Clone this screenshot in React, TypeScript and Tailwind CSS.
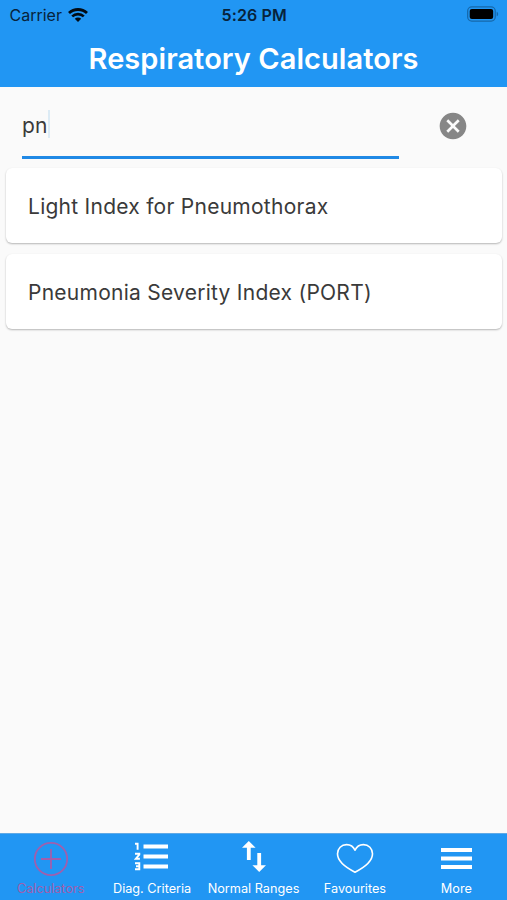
import { useState } from "react";
import type { ReactNode } from "react";

const calculators = [
  "Light Index for Pneumothorax",
  "Pneumonia Severity Index (PORT)",
];

function StatusBar() {
  return (
    <div className="grid h-[30px] grid-cols-3 items-center pl-[9.5px] pr-[8px] text-[#07233b]">
      <div className="flex items-center gap-[6px]">
        <span className="text-[16px] leading-[30px]">Carrier</span>
        <svg
          className="-mt-px"
          width="20"
          height="14"
          viewBox="0 0 20 14"
          fill="none"
        >
          <path d="M1 5.1a13 13 0 0 1 18 0" stroke="#020b14" strokeWidth="2.8" />
          <path
            d="M4.2 8.4a8.4 8.4 0 0 1 11.6 0"
            stroke="#020b14"
            strokeWidth="2.6"
          />
          <path d="M10 14l-3.2-3.3a4.6 4.6 0 0 1 6.4 0z" fill="#020b14" />
        </svg>
      </div>
      <div className="text-center text-[16px] font-semibold leading-[30px] tracking-[0.15px]">
        5:26 PM
      </div>
      <div className="flex justify-end">
        <svg
          className="-mt-[2px]"
          width="32"
          height="16"
          viewBox="0 0 33 16"
          fill="none"
        >
          <rect
            x="0.7"
            y="0.7"
            width="28.4"
            height="14.6"
            rx="4.2"
            stroke="#1668ab"
            strokeWidth="1.3"
          />
          <rect x="2.8" y="2.8" width="24.2" height="10.4" rx="2.2" fill="#000" />
          <path d="M30.6 5.6c2 .6 2 4.2 0 4.8z" fill="#1668ab" />
        </svg>
      </div>
    </div>
  );
}

function Tab({
  label,
  active,
  children,
}: {
  label: string;
  active?: boolean;
  children: ReactNode;
}) {
  return (
    <button
      className={
        active
          ? "flex flex-1 flex-col items-center text-[#a05fad]"
          : "flex flex-1 flex-col items-center text-white"
      }
    >
      <span className="flex h-[45px] items-end justify-center">{children}</span>
      <span className="whitespace-nowrap text-[12.7px] leading-[19px]">
        {label}
      </span>
    </button>
  );
}

export default function App() {
  const [query, setQuery] = useState("pn");

  return (
    <div className="flex h-[900px] w-full flex-col overflow-hidden bg-[#fafafa] font-['Inter','Liberation_Sans',sans-serif]">
      <header className="h-[87px] flex-none bg-[#2196f3]">
        <StatusBar />
        <h1 className="text-center text-[29px] font-semibold leading-[57px] tracking-[0.05px] text-white">
          Respiratory Calculators
        </h1>
      </header>

      <main className="min-h-0 flex-1">
        <div className="flex h-[72px] pl-[22px]">
          <div className="flex h-[72px] w-[377px] items-start border-b-[3px] border-[#2089e5] pt-[23px]">
            <span className="text-[21px] leading-[31px] tracking-[0.2px] text-[#3a3a3a]">
              {query}
            </span>
            <span className="h-[28px] w-[2px] bg-[#dcebf5]" />
          </div>
          <button
            className="ml-[38px] mt-[23px] h-[32px] w-[32px]"
            onClick={() => setQuery("")}
          >
            <svg width="32" height="32" viewBox="0 0 24 24" fill="#868686">
              <path d="M12 2C6.47 2 2 6.47 2 12s4.47 10 10 10 10-4.47 10-10S17.53 2 12 2zm5 13.59L15.59 17 12 13.41 8.41 17 7 15.59 10.59 12 7 8.41 8.41 7 12 10.59 15.59 7 17 8.41 13.41 12 17 15.59z" />
            </svg>
          </button>
        </div>

        <ul className="mt-[9px] flex flex-col gap-[11px] pl-[6px] pr-[5px]">
          {calculators.map((name) => (
            <li
              key={name}
              className="flex h-[75px] items-center rounded-[6px] bg-white pl-[22px] pt-[3px] text-[21px] leading-[32px] tracking-[0.26px] text-[#3a3a3a] shadow-[0_1px_2px_rgba(0,0,0,0.28)]"
            >
              {name}
            </li>
          ))}
        </ul>
      </main>

      <nav className="flex h-[67px] flex-none border-t border-[#5fa9e6] bg-[#2196f3]">
        <Tab label="Calculators" active>
          <svg
            className="mb-[2px]"
            width="36"
            height="36"
            viewBox="0 0 36 36"
            fill="none"
            stroke="currentColor"
            strokeWidth="1.8"
          >
            <circle cx="18" cy="18" r="16.2" />
            <path d="M18 8v20M8 18h20" />
          </svg>
        </Tab>
        <Tab label="Diag. Criteria">
          <svg
            className="mb-[8px] mr-[2px]"
            width="34"
            height="29"
            viewBox="0 0 34 29"
            fill="none"
            stroke="currentColor"
          >
            <path d="M9.5 4.5H34M9.5 14.5H34M9.5 24.5H34" strokeWidth="3.8" />
            <path
              d="M1 1.7h2.6v6.1M1 11.7h4.3v1l-3.4 4h4M1 21.2h4.3v6H1M2 24.2h3.3"
              strokeWidth="1.9"
            />
          </svg>
        </Tab>
        <Tab label="Normal Ranges">
          <svg
            className="mb-[7px]"
            width="24"
            height="31"
            viewBox="0 0 24 31"
            fill="currentColor"
          >
            <path d="M6.8 0L0 6.8h4.9V19h3.8V6.8h4.9zM17.2 31L24 24.2h-4.900V12h-3.800v12.200h-4.900z" />
          </svg>
        </Tab>
        <Tab label="Favourites">
          <svg
            className="mb-[5px]"
            width="38"
            height="31"
            viewBox="0 0 38 31"
            fill="none"
            stroke="currentColor"
            strokeWidth="1.6"
            strokeLinejoin="round"
          >
            <path d="M19 7.2C17.3 3.3 14 1.6 10.6 1.6 5.4 1.6 1.5 5.6 1.5 10.8c0 7.4 6.8 13 17.5 18.4 10.7-5.4 17.5-11 17.5-18.4 0-5.2-3.9-9.2-9.1-9.2-3.4 0-6.7 1.7-8.4 5.6z" />
          </svg>
        </Tab>
        <Tab label="More">
          <svg
            className="mb-[9px]"
            width="31"
            height="23"
            viewBox="0 0 31 23"
            fill="currentColor"
          >
            <path d="M0 1h31v4H0zM0 9.5h31v4H0zM0 18h31v4H0z" />
          </svg>
        </Tab>
      </nav>
    </div>
  );
}
